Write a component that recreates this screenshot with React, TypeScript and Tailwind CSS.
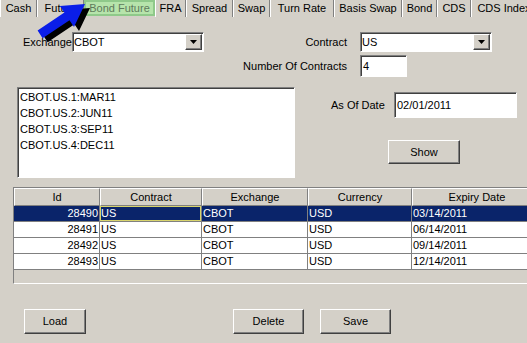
import React from 'react';

interface Tab {
  label: string;
  width: number;
}

interface Row {
  id: number;
  contract: string;
  exchange: string;
  currency: string;
  expiry: string;
}

const TABS: Tab[] = [
  { label: 'Cash', width: 37 },
  { label: 'Future', width: 47 },
  { label: 'Bond Future', width: 71 },
  { label: 'FRA', width: 31 },
  { label: 'Spread', width: 47 },
  { label: 'Swap', width: 37 },
  { label: 'Turn Rate', width: 64 },
  { label: 'Basis Swap', width: 68 },
  { label: 'Bond', width: 35 },
  { label: 'CDS', width: 34 },
  { label: 'CDS Index', width: 66 },
];

const ACTIVE_TAB = 'Bond Future';

const LIST_ITEMS = ['CBOT.US.1:MAR11', 'CBOT.US.2:JUN11', 'CBOT.US.3:SEP11', 'CBOT.US.4:DEC11'];

const ROWS: Row[] = [
  { id: 28490, contract: 'US', exchange: 'CBOT', currency: 'USD', expiry: '03/14/2011' },
  { id: 28491, contract: 'US', exchange: 'CBOT', currency: 'USD', expiry: '06/14/2011' },
  { id: 28492, contract: 'US', exchange: 'CBOT', currency: 'USD', expiry: '09/14/2011' },
  { id: 28493, contract: 'US', exchange: 'CBOT', currency: 'USD', expiry: '12/14/2011' },
];

const COLUMNS = ['Id', 'Contract', 'Exchange', 'Currency', 'Expiry Date'];

// classic 3d borders
const sunken =
  'bg-white border border-t-[#808080] border-l-[#808080] border-b-white border-r-white shadow-[inset_1px_1px_0_#404040]';
const raised =
  'bg-[#d4d0c8] border border-t-white border-l-white border-b-[#404040] border-r-[#404040] shadow-[inset_-1px_-1px_0_#808080]';

const ComboBox: React.FC<{ value: string; width: string }> = ({ value, width }) => (
  <div className={`${sunken} ${width} h-[20px] flex items-center`}>
    <span className="flex-1 pl-[1px] leading-none">{value}</span>
    <div className={`${raised} w-[17px] h-[16px] mr-[1px] flex items-center justify-center`}>
      <svg width="7" height="4" viewBox="0 0 7 4">
        <polygon points="0,0 7,0 3.5,4" fill="#000" />
      </svg>
    </div>
  </div>
);

const Button: React.FC<{ label: string; className: string }> = ({ label, className }) => (
  <button className={`${raised} ${className} flex items-center justify-center text-[11px] leading-none`}>
    {label}
  </button>
);

const App: React.FC = () => {
  return (
    <div className="w-[527px] h-[343px] bg-[#d4d0c8] relative overflow-hidden font-['Liberation_Sans',Arial,sans-serif] text-[11px] text-black">
      {/* Tab strip */}
      <div className="flex h-[17px] whitespace-nowrap">
        {TABS.map((tab) =>
          tab.label === ACTIVE_TAB ? (
            <div
              key={tab.label}
              style={{ width: tab.width }}
              className="shrink-0 h-[16px] bg-[#b6e4ab] border-2 border-[#8fc98a] text-[#5f7a5c] flex items-center justify-center"
            >
              {tab.label}
            </div>
          ) : (
            <div
              key={tab.label}
              style={{ width: tab.width }}
              className="shrink-0 h-[17px] border-l border-l-white border-r border-r-[#808080] flex items-center justify-center"
            >
              {tab.label}
            </div>
          )
        )}
      </div>

      {/* Pointer arrow over the tabs */}
      <svg className="absolute left-0 top-0" width="100" height="45" viewBox="0 0 100 45">
        <polygon
          points="42.6,34.6 69.4,16.6 64.9,9.9 90,8 79,30.9 74.5,24.2 47.6,42.2"
          fill="#000"
        />
        <polygon
          points="37.6,30.6 64.4,12.6 59.9,5.9 85,4 74,26.9 69.5,20.2 42.6,38.2"
          fill="#0a1ee8"
        />
      </svg>

      {/* Exchange / Contract */}
      <div className="flex items-center h-[20px] mt-[15px]">
        <span className="ml-[23px] w-[49px]">Exchange</span>
        <ComboBox value="CBOT" width="w-[132px]" />
        <span className="w-[156px] text-right pr-[13px]">Contract</span>
        <ComboBox value="US" width="w-[132px]" />
      </div>

      {/* Number of contracts */}
      <div className="flex items-center h-[22px] mt-[3px]">
        <span className="w-[360px] text-right pr-[13px]">Number Of Contracts</span>
        <div className={`${sunken} w-[47px] h-[22px] flex items-center pl-[2px]`}>4</div>
      </div>

      {/* Contract list + as of date */}
      <div className="flex mt-[10px]">
        <div className={`${sunken} ml-[17px] w-[278px] h-[91px] pt-[1px] pl-[2px]`}>
          {LIST_ITEMS.map((item) => (
            <div key={item} className="h-[16px] flex items-center">
              {item}
            </div>
          ))}
        </div>
        <div className="flex flex-col">
          <div className="flex items-center h-[26px] mt-[5px]">
            <span className="ml-[36px] w-[63px]">As Of Date</span>
            <div className={`${sunken} w-[123px] h-[26px] flex items-center pl-[2px]`}>02/01/2011</div>
          </div>
          <Button label="Show" className="ml-[93px] mt-[22px] w-[72px] h-[24px]" />
        </div>
      </div>

      {/* Results grid */}
      <div className="ml-[13px] mt-[9px] w-[514px] h-[97px] overflow-hidden border-t border-l border-[#808080] border-b border-b-white">
        <div className="grid grid-cols-[86px_102px_106px_104px_130px]">
          {COLUMNS.map((col) => (
            <div
              key={col}
              className="h-[18px] bg-[#d4d0c8] border border-t-white border-l-white border-b-[#808080] border-r-[#808080] flex items-center justify-center"
            >
              {col}
            </div>
          ))}
        </div>
        {ROWS.map((row, idx) => {
          const selected = idx === 0;
          const cell = `h-[16px] flex items-center border-r border-b border-[#808080] whitespace-nowrap ${
            selected ? 'bg-[#0a246a] text-white' : 'bg-white'
          }`;
          return (
            <div key={row.id} className="grid grid-cols-[86px_102px_106px_104px_130px]">
              <div className={`${cell} justify-end pr-[1px]`}>{row.id}</div>
              <div className={`${cell} pl-[1px] ${selected ? 'shadow-[inset_0_0_0_1px_#d8d46c]' : ''}`}>
                {row.contract}
              </div>
              <div className={`${cell} pl-[1px]`}>{row.exchange}</div>
              <div className={`${cell} pl-[1px]`}>{row.currency}</div>
              <div className={`${cell} pl-[1px]`}>{row.expiry}</div>
            </div>
          );
        })}
      </div>

      {/* Bottom actions */}
      <div className="flex mt-[25px]">
        <Button label="Load" className="ml-[24px] w-[62px] h-[25px]" />
        <Button label="Delete" className="ml-[147px] w-[71px] h-[25px]" />
        <Button label="Save" className="ml-[16px] w-[71px] h-[25px]" />
      </div>
    </div>
  );
};

export default App;
